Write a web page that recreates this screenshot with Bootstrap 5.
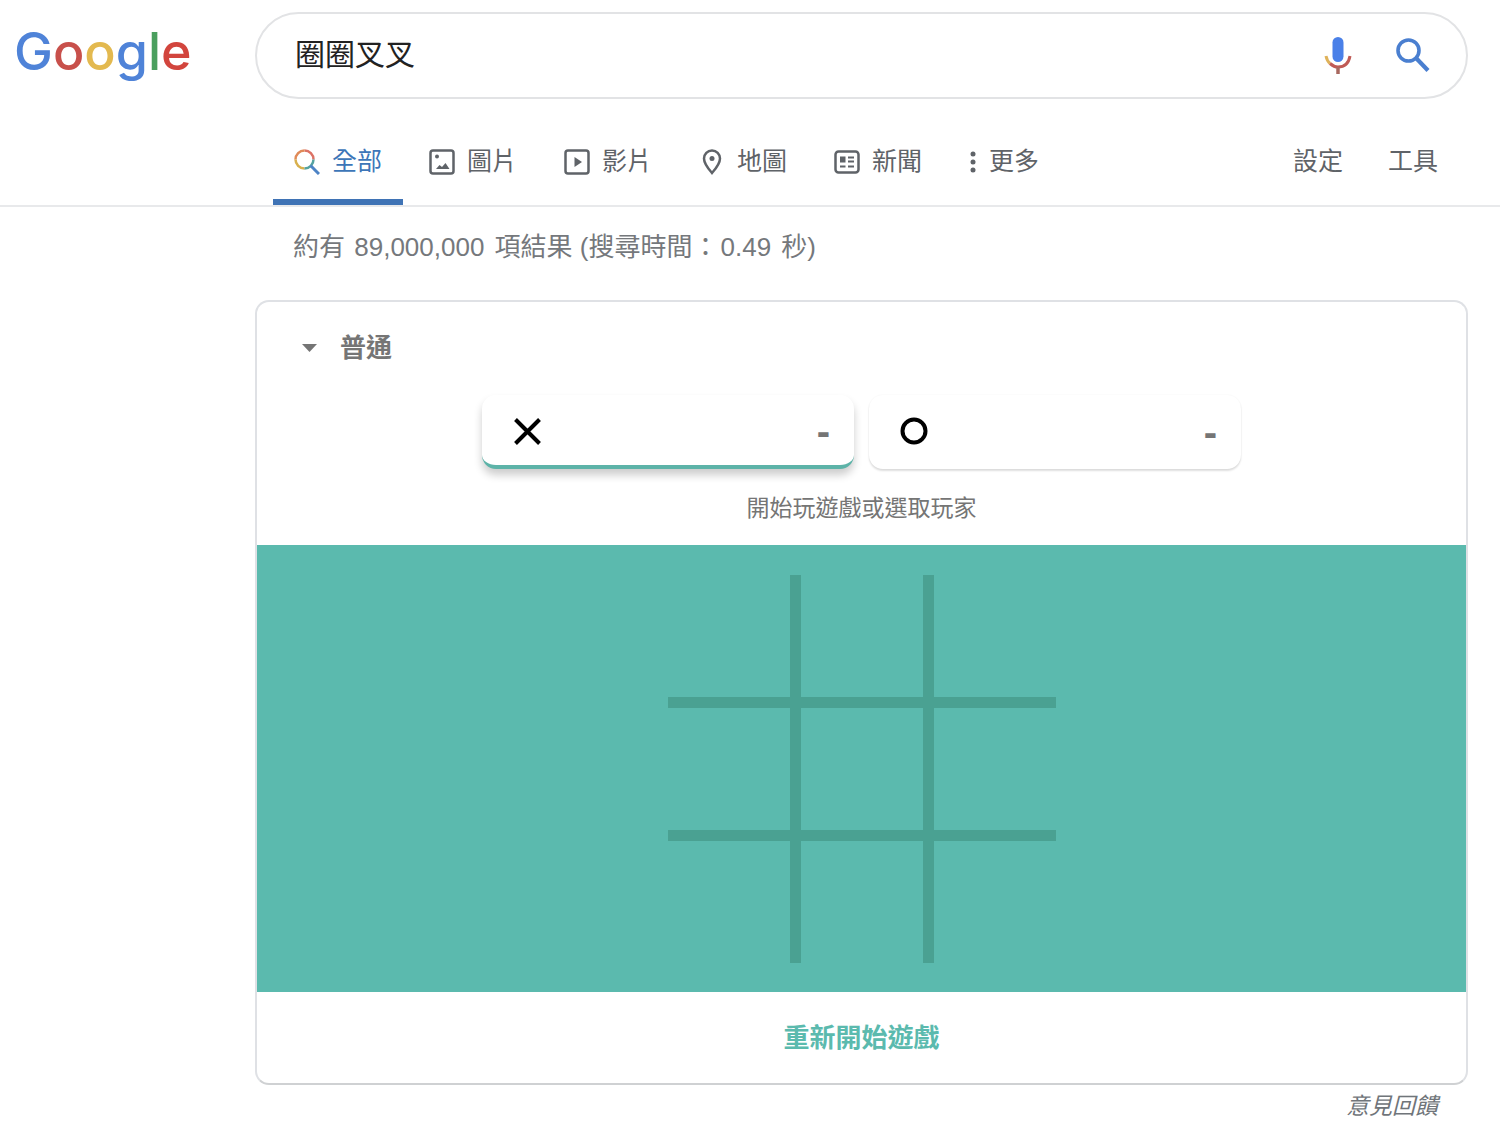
<!DOCTYPE html>
<html lang="zh-Hant">
<head>
<meta charset="utf-8">
<meta name="viewport" content="width=device-width, initial-scale=1">
<title>圈圈叉叉 - Google 搜尋</title>
<link href="https://cdn.jsdelivr.net/npm/bootstrap@5.3.0/dist/css/bootstrap.min.css" rel="stylesheet">
<style>
  :root { --side: 255px; --edge: 32px; --teal: #5bbaae; --line: #4aa192; --grey: #5f6368; }
  body { font-family: "Liberation Sans", "Noto Sans CJK TC", sans-serif; color: var(--grey); background: #fff; }
  svg { display: block; flex: none; }
  .top-bar { padding: 12px var(--edge) 0 0; }
  .logo-cell { width: var(--side); padding-left: 14px; }
  .logo { font: 500 52px/80px Inter, sans-serif; }
  .g-blue { color: #4f83d8; } .g-red { color: #c8504b; } .g-yellow { color: #e3b94f; } .g-green { color: #4a9f5e; } .g-red2 { color: #d2453d; }
  .search-pill { height: 87px; border: 2px solid #e2e3e5; border-radius: 44px; padding: 0 36px 0 38px; }
  .search-pill input { font-size: 30px; line-height: 40px; color: #222; padding: 0 0 2px; }
  .search-pill input:focus { outline: 0; box-shadow: none; }
  .search-tools { gap: 44px; }
  .tabs-bar { margin-top: 20px; padding: 0 62px 0 273px; border-bottom: 2px solid #e8e9eb; height: 88px; }
  .tab-list { gap: 5px; }
  .tab-link { height: 86px; padding: 6px 21px 0; gap: 12px; font-size: 25px; color: var(--grey); border-bottom: 6px solid transparent; white-space: nowrap; }
  .tab-link.active { color: #3d76b8; border-color: #3f73b5; }
  .tools a { font-size: 25px; color: var(--grey); }
  .tools { gap: 45px; height: 86px; padding-top: 6px; border-bottom: 6px solid transparent; }
  .results { padding: 20px var(--edge) 0 var(--side); }
  .stats { font-size: 26px; line-height: 40px; padding-left: 38px; margin-bottom: 33px; color: #75787c; }
  .stats span { margin: 0 3px 0 2px; }
  .game { border: 2px solid #dfe1e5; border-bottom-color: #cfd1d3; border-radius: 14px; overflow: hidden; }
  .game-head { height: 243px; padding-top: 26px; }
  .level { padding-left: 44px; gap: 21px; height: 40px; }
  .level select { appearance: none; border: 0; background: none; padding: 0; font-weight: 700; font-size: 26px; line-height: 40px; color: #757575; }
  .players { gap: 15px; margin-top: 27px; }
  .player { width: 372px; height: 74px; border: 0; background: #fff; border-radius: 14px; padding: 0 24px 0 30px; box-shadow: 0 2px 2px rgba(0,0,0,.13), 0 0 2px rgba(0,0,0,.05); }
  .player.chosen { border-bottom: 4px solid #5db3a8; box-shadow: 0 6px 9px rgba(0,0,0,.2); padding-top: 2px; }
  .score { font-weight: 700; font-size: 40px; line-height: 40px; color: #757575; }
  .hint { font-size: 23px; line-height: 32px; margin-top: 23px; color: #757575; }
  .board-area { background: var(--teal); padding: 30px 0 29px; }
  .board { display: grid; grid-template: repeat(3, 122px) / repeat(3, 122px); gap: 11px; background: var(--line); }
  .board button { border: 0; padding: 0; background: var(--teal); }
  .restart { font-size: 26px; line-height: 40px; font-weight: 700; color: var(--teal); border: 0; background: none; padding: 26px 25px 25px; width: 100%; }
  .feedback { font-size: 23px; line-height: 32px; padding: 5px 30px 0 0; }
  .feedback a { color: #70757a; font-style: italic; }
</style>
<script src="https://cdn.jsdelivr.net/npm/bootstrap@5.3.0/dist/js/bootstrap.bundle.min.js"></script>
</head>
<body>
<header>
  <div class="top-bar d-flex">
    <div class="logo-cell flex-shrink-0">
      <a class="logo text-decoration-none" href="#" aria-label="Google"><span class="g-blue">G</span><span class="g-red">o</span><span class="g-yellow">o</span><span class="g-blue">g</span><span class="g-green">l</span><span class="g-red2">e</span></a>
    </div>
    <form class="search-pill d-flex align-items-center flex-grow-1" role="search">
      <input class="form-control border-0 bg-transparent flex-grow-1" type="text" value="圈圈叉叉" aria-label="搜尋">
      <div class="search-tools d-flex align-items-center">
        <button class="btn border-0 p-0" type="button" aria-label="語音搜尋">
          <svg width="28" height="40" viewBox="0 0 28 40" fill="none"><rect x="8.500" y="1" width="11" height="25" rx="5.500" fill="#4a80e8"/><path d="M2 20q1 5 4 7.500" stroke="#dfb25a" stroke-width="3"/><path d="M6 27.500Q10 31 14 31q10 0 12-11" stroke="#c05a55" stroke-width="3"/><path d="M14 31v7" stroke="#a8685f" stroke-width="3.500"/></svg>
        </button>
        <button class="btn border-0 p-0" type="submit" aria-label="搜尋">
          <svg width="34" height="36" viewBox="0 0 34 36" fill="none" stroke="#4a7fd0" stroke-width="3.600"><circle cx="12.500" cy="12.500" r="10.500"/><path d="M20 20l12 12.500" stroke-width="4.200"/></svg>
        </button>
      </div>
    </form>
  </div>
  <nav class="tabs-bar d-flex justify-content-between" aria-label="搜尋類型">
    <div class="tab-list d-flex">
      <a class="tab-link active d-flex align-items-center text-decoration-none" href="#" aria-current="page">
        <svg width="26" height="26" viewBox="0 0 26 26" fill="none" stroke-width="2.500"><path d="M10.500 1.500a9 9 0 0 1 9 9" stroke="#dc7265"/><path d="M10.500 1.500a9 9 0 0 0-9 9" stroke="#e08a58"/><path d="M1.500 10.500a9 9 0 0 0 9 9" stroke="#d8b04e"/><path d="M10.500 19.500a9 9 0 0 0 9-9" stroke="#55a3a0"/><path d="M16.500 16.500l8.500 8.500" stroke="#4d83c5" stroke-width="3"/></svg>全部</a>
      <a class="tab-link d-flex align-items-center text-decoration-none" href="#">
        <svg width="26" height="26" viewBox="0 0 26 26"><rect x="1.500" y="1.500" width="23" height="23" rx="2.500" fill="none" stroke="#5f6368" stroke-width="2.500"/><circle cx="8" cy="7.500" r="2" fill="#5f6368"/><path d="M7 20l3.500-4 2.500 2 3.500-4 4 6z" fill="#5f6368"/></svg>圖片</a>
      <a class="tab-link d-flex align-items-center text-decoration-none" href="#">
        <svg width="26" height="26" viewBox="0 0 26 26"><rect x="1.500" y="1.500" width="23" height="23" rx="2.500" fill="none" stroke="#5f6368" stroke-width="2.500"/><path d="M10.500 8l7.500 5-7.500 5z" fill="#5f6368"/></svg>影片</a>
      <a class="tab-link d-flex align-items-center text-decoration-none" href="#">
        <svg width="26" height="26" viewBox="0 0 26 26"><path d="M13 1.500c-4.500 0-8 3.500-8 8 0 5.500 8 14.500 8 14.500s8-9 8-14.500c0-4.500-3.500-8-8-8z" fill="none" stroke="#5f6368" stroke-width="2.500"/><circle cx="13" cy="9.500" r="2.500" fill="#5f6368"/></svg>地圖</a>
      <a class="tab-link d-flex align-items-center text-decoration-none" href="#">
        <svg width="26" height="26" viewBox="0 0 26 26"><rect x="1.500" y="2.500" width="23" height="21" rx="3" fill="none" stroke="#5f6368" stroke-width="2.500"/><path d="M6 7.500h5.500v6H6zM14 7.500h6v2h-6zM14 11.500h6v2h-6zM6 16.500h5.500v2H6zM14 16.500h6v2h-6z" fill="#5f6368"/></svg>新聞</a>
      <a class="tab-link d-flex align-items-center text-decoration-none" href="#">
        <svg width="8" height="26" viewBox="0 0 8 26" fill="#5f6368"><circle cx="4" cy="5" r="2.500"/><circle cx="4" cy="13" r="2.500"/><circle cx="4" cy="21" r="2.500"/></svg>更多</a>
    </div>
    <div class="tools d-flex align-items-center">
      <a class="text-decoration-none" href="#">設定</a>
      <a class="text-decoration-none" href="#">工具</a>
    </div>
  </nav>
</header>
<main class="results">
  <p class="stats">約有 <span>89,000,000</span> 項結果 (搜尋時間：<span>0.49</span> 秒)</p>
  <section class="game">
    <div class="game-head">
      <div class="level d-flex align-items-center">
        <svg width="18" height="10" viewBox="0 0 18 10"><path d="M1 1h15L8.500 9z" fill="#757575"/></svg>
        <select aria-label="難度"><option>普通</option></select>
      </div>
      <div class="players d-flex justify-content-center">
        <button class="player chosen d-flex align-items-center justify-content-between" type="button" aria-label="X">
          <svg width="30" height="30" viewBox="0 0 30 30"><path d="M3.500 3.500l24 24M27.500 3.500l-24 24" stroke="#000" stroke-width="4"/></svg>
          <span class="score">-</span>
        </button>
        <button class="player d-flex align-items-center justify-content-between" type="button" aria-label="O">
          <svg width="30" height="30" viewBox="0 0 30 30"><circle cx="15" cy="14" r="11.500" fill="none" stroke="#000" stroke-width="4"/></svg>
          <span class="score">-</span>
        </button>
      </div>
      <p class="hint text-center mb-0">開始玩遊戲或選取玩家</p>
    </div>
    <div class="board-area d-flex justify-content-center">
      <div class="board">
        <button type="button" aria-label="1"></button><button type="button" aria-label="2"></button><button type="button" aria-label="3"></button>
        <button type="button" aria-label="4"></button><button type="button" aria-label="5"></button><button type="button" aria-label="6"></button>
        <button type="button" aria-label="7"></button><button type="button" aria-label="8"></button><button type="button" aria-label="9"></button>
      </div>
    </div>
    <button class="restart" type="button">重新開始遊戲</button>
  </section>
  <div class="feedback text-end"><a class="text-decoration-none" href="#">意見回饋</a></div>
</main>
</body>
</html>
